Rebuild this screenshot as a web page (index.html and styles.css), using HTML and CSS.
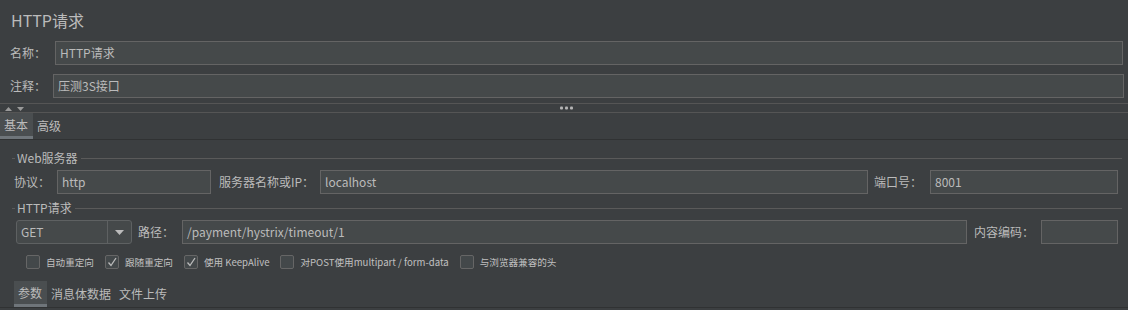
FILE: index.html
```html
<!DOCTYPE html>
<html lang="zh">
<head>
<meta charset="utf-8">
<title>HTTP请求</title>
<link rel="stylesheet" href="styles.css">
</head>
<body>
<div class="page">
  <div class="title">HTTP请求</div>
  <div class="row row-name">
    <span class="lbl lbl-name">名称：</span>
    <div class="input grow">HTTP请求</div>
  </div>
  <div class="row row-comment">
    <span class="lbl lbl-comment">注释：</span>
    <div class="input grow">压测3S接口</div>
  </div>
  <div class="splitter">
    <svg class="arrows" width="19" height="4" viewBox="0 0 19 4">
      <polygon points="0,4 3.5,0 7,4" fill="#9a9a9a"/>
      <polygon points="12,0 19,0 15.5,4" fill="#9a9a9a"/>
    </svg>
    <svg class="dots" width="13" height="4" viewBox="0 0 13 4">
      <rect x="0" y="0.5" width="3" height="3" rx="1" fill="#b5b5b5"/>
      <rect x="5" y="0.5" width="3" height="3" rx="1" fill="#b5b5b5"/>
      <rect x="10" y="0.5" width="3" height="3" rx="1" fill="#b5b5b5"/>
    </svg>
  </div>
  <div class="tabs top-tabs">
    <div class="tab active">基本</div>
    <div class="tab">高级</div>
  </div>
  <div class="group-title">
    <span class="dash"></span><span class="gt-text">Web服务器</span><span class="gt-line"></span>
  </div>
  <div class="row row-server">
    <span class="lbl l-proto">协议：</span>
    <div class="input w-proto">http</div>
    <span class="lbl l-host">服务器名称或IP：</span>
    <div class="input grow">localhost</div>
    <span class="lbl l-port">端口号：</span>
    <div class="input w-port">8001</div>
  </div>
  <div class="group-title g2">
    <span class="dash"></span><span class="gt-text">HTTP请求</span><span class="gt-line"></span>
  </div>
  <div class="row row-req">
    <div class="combo">
      <span class="combo-val">GET</span>
      <span class="combo-btn">
        <svg width="9" height="5" viewBox="0 0 9 5"><polygon points="0,0 9,0 4.5,5" fill="#bbbbbb"/></svg>
      </span>
    </div>
    <span class="lbl l-path">路径：</span>
    <div class="input grow">/payment/hystrix/timeout/1</div>
    <span class="lbl l-enc">内容编码：</span>
    <div class="input w-enc"></div>
  </div>
  <div class="checks">
    <div class="chk"><span class="box"></span><span class="ctext">自动重定向</span></div>
    <div class="chk"><span class="box"><svg width="12" height="12" viewBox="0 0 12 12"><polyline points="2.5,6.5 5,9.5 10,2" fill="none" stroke="#bbbbbb" stroke-width="1.3"/></svg></span><span class="ctext">跟随重定向</span></div>
    <div class="chk"><span class="box"><svg width="12" height="12" viewBox="0 0 12 12"><polyline points="2.5,6.5 5,9.5 10,2" fill="none" stroke="#bbbbbb" stroke-width="1.3"/></svg></span><span class="ctext">使用 KeepAlive</span></div>
    <div class="chk"><span class="box"></span><span class="ctext">对POST使用multipart / form-data</span></div>
    <div class="chk"><span class="box"></span><span class="ctext">与浏览器兼容的头</span></div>
  </div>
  <div class="tabs bottom-tabs">
    <div class="tab active">参数</div>
    <div class="tab">消息体数据</div>
    <div class="tab">文件上传</div>
  </div>
</div>
</body>
</html>
```

FILE: styles.css
```css
html, body {
  margin: 0;
  padding: 0;
  background: #3c3f41;
}
body {
  width: 1128px;
  height: 310px;
  overflow: hidden;
  font-family: "Noto Sans CJK SC", "Noto Sans", sans-serif;
  color: #bbbbbb;
  font-size: 12px;
}
.page {
  display: flex;
  flex-direction: column;
}
.title {
  height: 41px;
  box-sizing: border-box;
  padding: 9px 0 0 11px;
  font-size: 16px;
  line-height: 22px;
}
.row {
  display: flex;
  align-items: center;
  height: 24px;
}
.lbl {
  white-space: nowrap;
  box-sizing: border-box;
  line-height: 24px;
}
.input {
  box-sizing: border-box;
  height: 24px;
  border: 1px solid #646464;
  background: #45494a;
  padding-left: 4px;
  line-height: 22px;
  white-space: nowrap;
  overflow: hidden;
}
.grow { flex: 1; }
.row-name { padding: 0 5px 0 10px; }
.lbl-name { width: 45px; }
.row-comment { margin-top: 9px; padding: 0 4px 0 10px; }
.lbl-comment { width: 43px; }
.splitter {
  margin-top: 5px;
  height: 8px;
  border-top: 1px solid #555555;
  border-bottom: 1px solid #555555;
  position: relative;
  display: flex;
  align-items: center;
  justify-content: center;
}
.arrows { position: absolute; left: 5px; top: 3px; }
.dots { position: relative; left: 2px; }
.tabs {
  display: flex;
  height: 26px;
  border-bottom: 1px solid #303233;
}
.tab {
  box-sizing: border-box;
  height: 26px;
  padding: 0 4px;
  line-height: 26px;
  font-size: 12px;
}
.tab.active {
  background: #4a4e50;
  border-bottom: 3px solid #6f757a;
  line-height: 24px;
}
.top-tabs .tab.active { padding: 0 5px 0 4px; }
.group-title {
  display: flex;
  align-items: center;
  height: 24px;
  margin-top: 6px;
  padding: 0 6px 0 12px;
}
.dash { width: 3px; height: 1px; background: #5a5a5a; }
.gt-text { padding: 0 3px 0 2px; line-height: 20px; font-size: 12px; }
.gt-line { flex: 1; height: 1px; background: #5a5a5a; }
.row-server { padding: 0 10px 0 14px; }
.l-proto { width: 43px; }
.w-proto { width: 154px; }
.l-host { width: 109px; padding-left: 8px; }
.l-port { width: 62px; padding-left: 6px; }
.w-port { width: 188px; }
.g2 { margin-top: 2px; }
.row-req { padding: 0 10px 0 16px; }
.combo {
  box-sizing: border-box;
  width: 116px;
  height: 24px;
  border: 1px solid #5e6162;
  border-radius: 3px;
  background: #45494a;
  display: flex;
}
.combo-val { flex: 1; padding-left: 4px; line-height: 22px; }
.combo-btn {
  width: 23px;
  border-left: 1px solid #5e6162;
  display: flex;
  align-items: center;
  justify-content: center;
}
.l-path { width: 50px; padding-left: 6px; }
.l-enc { width: 74px; padding-left: 7px; }
.w-enc { width: 77px; }
.checks {
  display: flex;
  align-items: center;
  height: 24px;
  margin-top: 6px;
  padding-left: 26px;
  gap: 11px;
}
.chk { display: flex; align-items: center; gap: 6px; }
.box {
  box-sizing: border-box;
  width: 14px;
  height: 14px;
  border: 1px solid #666666;
  border-radius: 2px;
  background: #43484a;
  display: flex;
  align-items: center;
  justify-content: center;
}
.ctext { font-size: 9.6px; line-height: 14px; white-space: nowrap; color: #c0c0c0; }
.bottom-tabs {
  margin-top: 7px;
  padding-left: 14px;
}
.bottom-tabs .tab.active { padding: 0 5px 0 4px; }
```
